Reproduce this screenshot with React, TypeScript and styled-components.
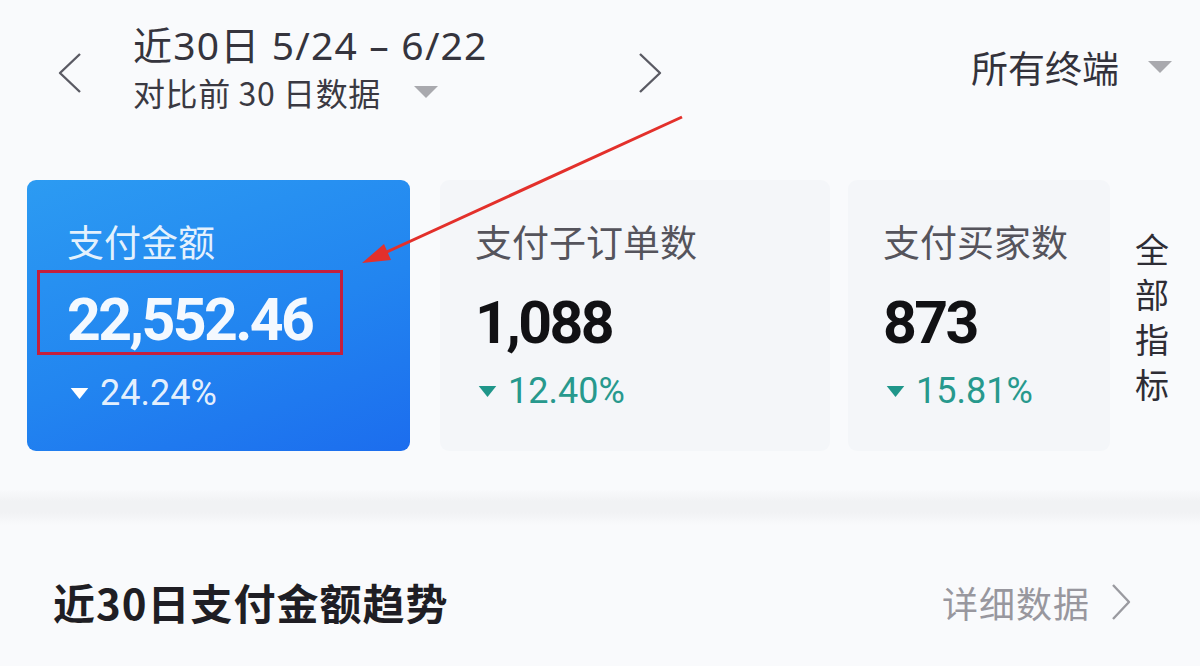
import styled, { createGlobalStyle } from "styled-components";

const GlobalStyle = createGlobalStyle`
    html, body {
        margin: 0;
        padding: 0;
        background: #f9fafc;
    }
    body {
        font-family: "Noto Sans CJK SC", "Noto Sans", Roboto, sans-serif;
        color: #2b2b33;
    }
`;

const metrics = [
    { label: "支付子订单数", value: "1,088", rate: "12.40%" },
    { label: "支付买家数", value: "873", rate: "15.81%" },
];

const Chevron = ({ dir }: { dir: "left" | "right" }) => (
    <svg width="26" height="42" viewBox="0 0 26 42" fill="none">
        <path
            d={dir === "left" ? "M23 2 L3 21 L23 40" : "M3 2 L23 21 L3 40"}
            stroke="#5a5a63"
            strokeWidth="2.4"
            strokeLinejoin="round"
        />
    </svg>
);

const Caret = ({ color = "#a9a9ae", w = 26, h = 14 }) => (
    <svg width={w} height={h} viewBox="0 0 26 14" preserveAspectRatio="none">
        <path d="M1 1 H25 L13 13 Z" fill={color} />
    </svg>
);

export default function App() {
    return (
        <>
            <GlobalStyle />
            <Page>
                <Header>
                    <DateNav>
                        <NavButton>
                            <Chevron dir="left" />
                        </NavButton>
                        <DateBlock>
                            <DateTitle>近30日 5/24 – 6/22</DateTitle>
                            <Compare>
                                对比前 30 日数据
                                <Caret />
                            </Compare>
                        </DateBlock>
                        <NavButton>
                            <Chevron dir="right" />
                        </NavButton>
                    </DateNav>
                    <Terminal>
                        所有终端
                        <Caret />
                    </Terminal>
                </Header>

                <Metrics>
                    <Card $active>
                        <Label $active>支付金额</Label>
                        <Highlight>
                            <Value $active>22,552.46</Value>
                        </Highlight>
                        <Rate $active>
                            <Caret color="#ffffff" w={19} h={13} />
                            24.24%
                        </Rate>
                    </Card>
                    {metrics.map((m) => (
                        <Card key={m.label}>
                            <Label>{m.label}</Label>
                            <Value>{m.value}</Value>
                            <Rate>
                                <Caret color="#1f968a" w={19} h={13} />
                                {m.rate}
                            </Rate>
                        </Card>
                    ))}
                    <AllMetrics>全部指标</AllMetrics>
                </Metrics>

                <Divider />

                <SectionHead>
                    <SectionTitle>近30日支付金额趋势</SectionTitle>
                    <Detail>
                        详细数据
                        <svg width="22" height="38" viewBox="0 0 22 38" fill="none">
                            <path
                                d="M3 2 L19 19 L3 36"
                                stroke="#9a9aa0"
                                strokeWidth="2.4"
                                strokeLinejoin="round"
                            />
                        </svg>
                    </Detail>
                </SectionHead>

                <Annotation width="1200" height="666" viewBox="0 0 1200 666">
                    <line
                        x1="682"
                        y1="117"
                        x2="380"
                        y2="255"
                        stroke="#e3302b"
                        strokeWidth="3"
                    />
                    <path d="M362 263 L384 244 L391 260 Z" fill="#e3302b" />
                </Annotation>
            </Page>
        </>
    );
}

const Page = styled.div`
    position: relative;
    width: 1200px;
    height: 666px;
    overflow: hidden;
    background: #f9fafc;
`;

const Header = styled.div`
    display: flex;
    align-items: flex-start;
    justify-content: space-between;
    height: 180px;
    padding: 20px 27px 0 57px;
    box-sizing: border-box;
`;

const DateNav = styled.div`
    display: flex;
    align-items: flex-start;
`;

const NavButton = styled.div`
    display: flex;
    padding-top: 32px;
`;

const DateBlock = styled.div`
    display: flex;
    flex-direction: column;
    width: 554px;
    padding-left: 50px;
    box-sizing: border-box;
`;

const DateTitle = styled.div`
    font-size: 39px;
    line-height: 50px;
    letter-spacing: 1.2px;
    color: #35343d;
    font-family: "Noto Sans", "Noto Sans CJK SC", sans-serif;
`;

const Compare = styled.div`
    display: flex;
    align-items: center;
    gap: 32px;
    font-size: 32px;
    line-height: 44px;
    letter-spacing: 0.6px;
    color: #3a3942;
`;

const Terminal = styled.div`
    display: flex;
    align-items: center;
    gap: 28px;
    margin-top: 22px;
    font-size: 37px;
    line-height: 50px;
    color: #33323b;
`;

const Metrics = styled.div`
    display: flex;
    align-items: stretch;
    height: 271px;
    padding-left: 27px;
`;

const Card = styled.div<{ $active?: boolean }>`
    display: flex;
    flex-direction: column;
    box-sizing: border-box;
    border-radius: 9px;
    padding: 36px 0 0 ${(p) => (p.$active ? 40 : 35)}px;
    width: ${(p) => (p.$active ? 383 : 390)}px;
    margin-right: ${(p) => (p.$active ? 30 : 18)}px;
    background: ${(p) =>
        p.$active
            ? "linear-gradient(160deg, #2c9bf2 0%, #2285f0 55%, #1c6dee 100%)"
            : "#f4f6f9"};
    &:nth-child(3) {
        width: 262px;
        margin-right: 0;
        padding-left: 35px;
    }
`;

const Label = styled.div<{ $active?: boolean }>`
    font-size: 37px;
    line-height: 50px;
    color: ${(p) => (p.$active ? "rgba(255,255,255,0.88)" : "#55545c")};
`;

const Highlight = styled.div`
    margin: 4px 0 0 -30px;
    width: 306px;
    height: 85px;
    box-sizing: border-box;
    border: 3px solid #c41f3d;
    padding: 0 0 2px 27px;
    display: flex;
    align-items: flex-end;
`;

const Value = styled.div<{ $active?: boolean }>`
    font-family: Roboto, "Noto Sans", sans-serif;
    font-weight: 700;
    font-size: 59px;
    line-height: 60px;
    letter-spacing: -2.6px;
    color: ${(p) => (p.$active ? "#f4f9ff" : "#111114")};
    margin-top: ${(p) => (p.$active ? 0 : 27)}px;
`;

const Rate = styled.div<{ $active?: boolean }>`
    display: flex;
    align-items: center;
    gap: 11px;
    margin-top: 16px;
    padding-left: 3px;
    font-family: Roboto, "Noto Sans", sans-serif;
    font-size: 36px;
    line-height: 44px;
    color: ${(p) => (p.$active ? "rgba(255,255,255,0.9)" : "#27998d")};
`;

const AllMetrics = styled.div`
    width: 34px;
    margin: 46px 0 0 25px;
    font-size: 34px;
    line-height: 45px;
    color: #2e2d35;
`;

const Divider = styled.div`
    height: 36px;
    margin-top: 38px;
    background: linear-gradient(
        180deg,
        rgba(240, 241, 243, 0) 0%,
        #f1f2f4 35%,
        #f1f2f4 65%,
        rgba(240, 241, 243, 0) 100%
    );
`;

const SectionHead = styled.div`
    display: flex;
    align-items: center;
    justify-content: space-between;
    margin-top: 50px;
    padding: 0 68px 0 53px;
`;

const SectionTitle = styled.div`
    font-size: 42px;
    line-height: 54px;
    letter-spacing: 1px;
    font-weight: 700;
    color: #1f1e24;
`;

const Detail = styled.div`
    display: flex;
    align-items: center;
    gap: 20px;
    font-size: 36px;
    line-height: 54px;
    letter-spacing: 1px;
    color: #98979e;
`;

const Annotation = styled.svg`
    position: absolute;
    left: 0;
    top: 0;
    pointer-events: none;
`;
